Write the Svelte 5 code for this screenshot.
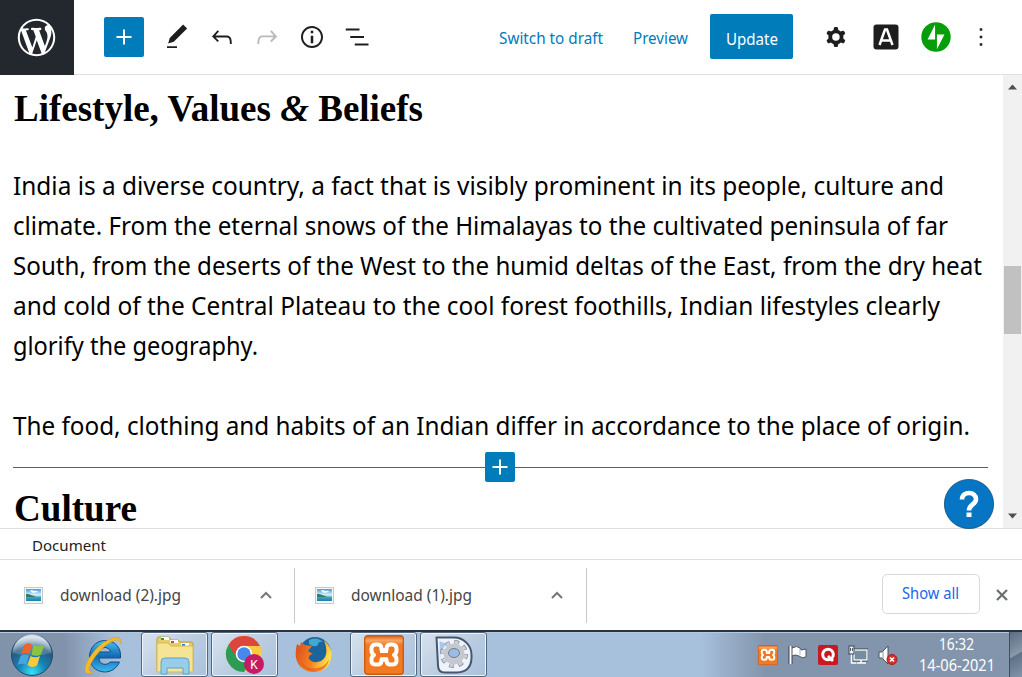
<script>
  const paragraph = [
    ['India is a diverse country, a fact that is visibly prominent in its people, culture and', 931],
    ['climate. From the eternal snows of the Himalayas to the cultivated peninsula of far', 935],
    ['South, from the deserts of the West to the humid deltas of the East, from the dry heat', 969],
    ['and cold of the Central Plateau to the cool forest foothills, Indian lifestyles clearly', 927],
    ['glorify the geography.', 245]
  ];
  const downloads = ['download (2).jpg', 'download (1).jpg'];
  const gear = 'M10.289 4.836A1 1 0 0111.275 4h1.306a1 1 0 01.987.836l.244 1.466c.787.26 1.503.679 2.108 1.218l1.393-.522a1 1 0 011.216.437l.653 1.13a1 1 0 01-.23 1.273l-1.148.944a6.025 6.025 0 010 2.435l1.149.946a1 1 0 01.23 1.272l-.653 1.13a1 1 0 01-1.216.437l-1.394-.522c-.605.54-1.32.958-2.108 1.218l-.244 1.466a1 1 0 01-.987.836h-1.306a1 1 0 01-.986-.836l-.244-1.466a5.995 5.995 0 01-2.108-1.218l-1.394.522a1 1 0 01-1.217-.436l-.653-1.131a1 1 0 01.23-1.272l1.149-.946a6.026 6.026 0 010-2.435l-1.148-.944a1 1 0 01-.23-1.272l.653-1.131a1 1 0 011.217-.437l1.393.522a5.994 5.994 0 012.108-1.218l.244-1.466zM14.929 12a3 3 0 11-6 0 3 3 0 016 0z';
</script>

{#snippet fit(text, width, height, base, cls)}
  <svg class="fit {cls}" {width} {height}><text x="0" y={base} textLength={width} lengthAdjust="spacingAndGlyphs">{text}</text></svg>
{/snippet}

{#snippet icon(d, size = 30)}
  <svg width={size} height={size} viewBox="0 0 24 24" fill="currentColor"><path fill-rule="evenodd" {d} /></svg>
{/snippet}

{#snippet xampp(size)}
  <svg width={size} height={size} viewBox="0 0 40 40">
    <defs><linearGradient id="xo" x2="0" y2="1"><stop stop-color="#d9601b" /><stop offset=".12" stop-color="#f7a764" /><stop offset=".25" stop-color="#ee7a22" /><stop offset="1" stop-color="#f5791f" /></linearGradient></defs>
    <rect x=".7" y=".7" width="38.6" height="38.6" rx="3" fill="url(#xo)" stroke="#cf5a14" stroke-width="1.4" />
    <path d="M13.500 9.500h-1.500q-4.500 0-4.500 4v2q0 3 2.500 4.500-2.500 1.500-2.500 4.500v1.500q0 3.500 4.500 3.500h1.500q4 0 4-4v-1h5v1q0 4 4 4h1.500q4.500 0 4.500-3.500v-1.500q0-3-2.500-4.500 2.500-1.500 2.500-4.500v-2q0-4-4.500-4h-1.500q-4 0-4 4v1.500h-5v-1.500q0-4-4-4z" fill="none" stroke="#fff" stroke-width="4" stroke-linejoin="round" />
    <path d="M16 15h8v3h-8zM16 22.500h8v3h-8z" fill="#fff" />
    <path d="M13 20h14" stroke="#f0761f" stroke-width="3" />
  </svg>
{/snippet}

<div class="screen">
  <header>
    <div class="wp">
      <svg width="45" height="45" viewBox="-2 -2 24 24" fill="#fff"><path d="M20 10c0-5.510-4.490-10-10-10C4.480 0 0 4.490 0 10c0 5.520 4.480 10 10 10 5.510 0 10-4.480 10-10zM7.780 15.370L4.370 6.220c.55-.02 1.170-.08 1.170-.08.5-.06.44-1.130-.06-1.110 0 0-1.450.11-2.370.11-.18 0-.37 0-.58-.01C4.120 2.690 6.870 1.110 10 1.110c2.330 0 4.450.87 6.050 2.340-.68-.11-1.650.39-1.650 1.580 0 .74.45 1.360.9 2.100.35.61.55 1.360.55 2.460 0 1.490-1.400 5-1.400 5l-3.030-8.370c.54-.02.82-.17.82-.17.5-.05.44-1.250-.06-1.220 0 0-1.440.12-2.380.12-.87 0-2.330-.12-2.330-.12-.5-.03-.56 1.200-.06 1.220l.92.08 1.260 3.410zM17.410 10c.24-.64.74-1.870.43-4.250.7 1.290 1.050 2.710 1.050 4.250 0 3.290-1.730 6.240-4.400 7.780.97-2.590 1.940-5.200 2.920-7.780zM6.100 18.090C3.120 16.650 1.110 13.530 1.110 10c0-1.300.23-2.480.72-3.590C3.250 10.300 4.670 14.200 6.100 18.090zm4.030-6.630l2.580 6.980c-.86.29-1.760.45-2.710.45-.79 0-1.570-.11-2.290-.33.81-2.380 1.620-4.740 2.420-7.100z" /></svg>
    </div>
    <div class="tools">
      <button class="add" aria-label="Add block">{@render icon('M18 11.2h-5.2V6h-1.6v5.2H6v1.6h5.2V18h1.6v-5.2H18z')}</button>
      <span class="tool">{@render icon('M20.1 5.1L16.900 2 6.200 12.700l-1.300 4.400 4.500-1.300L20.100 5.100zM4 20.800h8v-1.500H4v1.500z')}</span>
      <span class="tool">{@render icon('M18.3 11.7c-.6-.6-1.4-.9-2.3-.9H6.7l2.9-3.3-1.1-1-4.5 5L8.5 16l1-1-2.7-2.7H16c.5 0 .9.2 1.3.5 1 1 1 3.400 1 4.500v.3h1.500v-.2c0-1.500 0-4.300-1.500-5.700z')}</span>
      <span class="tool faded">{@render icon('M15.6 6.5l-1.100 1 2.900 3.300H8c-.9 0-1.700.3-2.300.9-1.400 1.500-1.400 4.200-1.400 5.600v.2h1.500v-.3c0-1.100 0-3.500 1-4.500.3-.3.7-.5 1.300-.5h9.200L14.500 15l1.100 1.100 4.600-4.600-4.600-5z')}</span>
      <span class="tool">{@render icon('M12 3.2c-4.8 0-8.8 3.9-8.8 8.8 0 4.8 3.9 8.8 8.8 8.8 4.8 0 8.8-3.9 8.8-8.8 0-4.8-4-8.8-8.8-8.8zm0 16c-4 0-7.2-3.3-7.2-7.2C4.8 8 8 4.8 12 4.8s7.2 3.3 7.2 7.2c0 4-3.2 7.2-7.2 7.2zM11 17h2v-6h-2v6zm0-8h2V7h-2v2z')}</span>
      <span class="tool">{@render icon('M3 5.2h11v1.5H3zM6.6 11.2h11v1.5h-11zM10.200 17.200h11v1.500h-11z')}</span>
    </div>
    <div class="actions">
      {@render fit('Switch to draft', 104, 24, 19, 'link')}
      {@render fit('Preview', 55, 24, 19, 'link preview')}
      <button class="update">{@render fit('Update', 52, 24, 20, 'white')}</button>
      <span class="tool cog">{@render icon(gear)}</span>
      <span class="tool"><svg width="26" height="26" viewBox="0 0 26 26"><rect x=".5" y=".5" width="25" height="25" rx="3" fill="#1e1e1e" /><path d="M6.500 21L12 5.500h2L19.500 21M8.500 16.500h9" fill="none" stroke="#fff" stroke-width="2.500" /></svg></span>
      <span class="tool"><svg width="30" height="30" viewBox="0 0 32 32"><circle cx="16" cy="16" r="15.700" fill="#069e08" /><path fill="#fff" d="M15 18.700H7L15 3zM17 29V13.300h8z" /></svg></span>
      <span class="tool dots">{@render icon('M13 19h-2v-2h2v2zm0-6h-2v-2h2v2zm0-6h-2V5h2v2z')}</span>
    </div>
  </header>

  <main>
    <article>
      <svg class="fit title" width="409" height="64"><text x="0" y="46" textLength="409" lengthAdjust="spacingAndGlyphs">Lifestyle, Values <tspan font-style="italic">&amp;</tspan> Beliefs</text></svg>
      <div class="para">
        {#each paragraph as [line, width]}{@render fit(line, width, 40, 29, 'copy')}{/each}
      </div>
      {@render fit('The food, clothing and habits of an Indian differ in accordance to the place of origin.', 957, 40, 29, 'copy last')}
      <div class="inserter"><button aria-label="Insert block">{@render icon('M18 11.2h-5.2V6h-1.6v5.2H6v1.6h5.2V18h1.6v-5.2H18z')}</button></div>
      {@render fit('Culture', 123, 46, 39, 'title')}
    </article>
    <div class="scroll">
      <svg width="9" height="6"><path d="M0 5.500L4.500.5 9 5.500z" fill="#505050" /></svg>
      <div class="thumb"></div>
      <svg width="9" height="6"><path d="M0 .5L4.500 5.500 9 .5z" fill="#505050" /></svg>
    </div>
    <div class="help"><svg width="50" height="50" viewBox="0 0 50 50"><circle cx="25" cy="25" r="24.600" fill="#0675c4" stroke="#164e78" stroke-width=".8" /><path d="M18 20.500c0-9 14.500-8.500 14 0-.3 5-7 5-7 11" fill="none" stroke="#fff" stroke-width="4.600" /><path d="M22.500 33.500h5v4.500h-5z" fill="#fff" /></svg></div>
  </main>

  <footer>{@render fit('Document', 74, 24, 16, 'doc')}</footer>

  <section class="downloads">
    {#each downloads as name}
      <div class="item">
        <svg class="pic" width="19" height="17" viewBox="0 0 19 17"><defs><linearGradient id="sky" x2="0" y2="1"><stop stop-color="#479be0" /><stop offset=".5" stop-color="#d5f4ff" /><stop offset=".7" stop-color="#45a1ad" /><stop offset="1" stop-color="#1682bd" /></linearGradient></defs><rect x=".5" y=".5" width="18" height="16" fill="#f7f7f7" stroke="#c8c8c8" /><path d="M2 2h15v12H2z" fill="url(#sky)" /><path d="M2 7c5 0 7 2 10 3H2z" fill="#327d64" /><path d="M6 4q2-2 4 0 3-1 4 1L9 6z" fill="#edfaff" /></svg>
        {@render fit(name, 121, 24, 18, 'file')}
        <svg class="chev" width="12" height="8"><path d="M1 7l5-5 5 5" fill="none" stroke="#747679" stroke-width="2" /></svg>
      </div>
    {/each}
    <button class="show">{@render fit('Show all', 57, 24, 17, 'blue')}</button>
    <svg class="close" width="12" height="12"><path d="M1 1l10 10M11 1L1 11" stroke="#6b6e72" stroke-width="2.200" /></svg>
  </section>

  <nav>
    <div class="slot start">
      <svg width="44" height="44" viewBox="0 0 44 44"><defs><radialGradient id="orb" cx=".5" cy=".92" r=".85"><stop stop-color="#37dff6" /><stop offset=".4" stop-color="#1681b4" /><stop offset=".75" stop-color="#285a80" /><stop offset="1" stop-color="#b0c7d7" /></radialGradient><linearGradient id="gl" x2="0" y2="1"><stop stop-color="#fff" stop-opacity=".6" /><stop offset="1" stop-color="#fff" stop-opacity=".1" /></linearGradient></defs>
        <circle cx="22" cy="22" r="20.500" fill="url(#orb)" stroke="#234b6a" /><path d="M3 20a19 19 0 0138 0q-19 6-38 0z" fill="url(#gl)" />
        <path d="M14 12q4-3 8-.5l-2.500 9.500q-4.500-2-8.500.5z" fill="#ed6529" /><path d="M23.500 12q5 2.500 10.500 0l-3 9.500q-4.500 2.500-9.500 0z" fill="#8ac440" /><path d="M10.500 23q4-2.500 8.500-.5l-3 9.500q-4-2.500-8.500 0z" fill="#49a5df" /><path d="M20.500 23q5 2.500 9.500 0l-3 9.500q-5 3-9.500-.5z" fill="#fbc83b" /></svg>
    </div>
    <div class="slot ie">
      <svg width="42" height="42" viewBox="0 0 42 42"><defs><linearGradient id="eg" x2="0" y2="1"><stop stop-color="#49c1ef" /><stop offset=".5" stop-color="#126bb4" /><stop offset="1" stop-color="#3dbbec" /></linearGradient></defs>
        <path d="M37.500 24H16c0 7 8 8 11 4h9.500c-3 7-9 10-15 10-21-1-19-30.500 0-31.500 11 0 17 7.500 16 17.500zM27.500 18c-1-6-10.500-6-11.500 0z" fill="url(#eg)" stroke="#104c8d" />
        <path d="M38 10c1-8-6-8-13-4C14 11 2 27 2 36c0 5 6 4 11 0-5 3-8 2-6.500-3C10 23 21 11 30 7c5-2 7-1 8 3z" fill="#f5ba27" stroke="#d7991a" stroke-width=".5" /></svg>
    </div>
    <div class="slot task">
      <svg width="42" height="42" viewBox="0 0 42 42"><path d="M3 5q0-2 2-2h10l2 3h7l2 2h11q2 0 2 2v26H3z" fill="#e6cd69" stroke="#bc9e40" /><path d="M7 3h8v3H7zM16 6h8v3h-8zM27 9h8v3h-8z" fill="#fff" /><path d="M7 4h3v2H7z" fill="#2c9b46" /><path d="M17 7h3v2h-3z" fill="#d9432d" /><path d="M28 10h3v2h-3z" fill="#3381ca" /><path d="M3 9h11l3 3h22v26H3z" fill="#f5e494" stroke="#d4b957" /><path d="M7 40V28q0-4 4-4h20q4 0 4 4v12h-6v-6H13v6z" fill="#96cee9" stroke="#5ba4ca" /></svg>
    </div>
    <div class="slot task chrome">
      <svg width="42" height="42" viewBox="0 0 42 42"><circle cx="20" cy="20" r="18" fill="#f9c93f" /><path d="M4.400 11A18 18 0 0136 12H20L12 25z" fill="#dc463c" /><path d="M4.400 11A18 18 0 0020 38l8-13-15-1z" fill="#2b9b55" /><circle cx="20" cy="20" r="8.300" fill="#fff" /><circle cx="20" cy="20" r="6.700" fill="#4788ef" /><circle cx="30" cy="30" r="10" fill="#c61b62" /><text x="30" y="34.500" text-anchor="middle" fill="#fff" font-size="12">K</text></svg>
    </div>
    <div class="slot firefox">
      <svg width="38" height="38" viewBox="0 0 38 38"><defs><linearGradient id="fx" x2="1" y2=".3"><stop stop-color="#d84920" /><stop offset=".6" stop-color="#f5841f" /><stop offset="1" stop-color="#ffe04b" /></linearGradient></defs><circle cx="20" cy="17" r="16" fill="#1c649d" /><path d="M14 4q8-4 14 2-5-1-5 3-4 3-9-1z" fill="#42a7d3" /><path d="M2 8l3 2 1-4 4 3 7 1-4 5 5 3q-5 1-4 5 4 5 12 2 9-5 3-21 11 10 6 22C29 41 4 39 1 22q-1-6 1-14z" fill="url(#fx)" /><path d="M5 22q4 12 18 10 8-2 11-9-2 12-15 13Q7 35 5 22z" fill="#e95923" opacity=".7" /></svg>
    </div>
    <div class="slot task">{@render xampp(40)}</div>
    <div class="slot task">
      <svg width="38" height="38" viewBox="0 0 38 38"><path d="M1.500 1.500H19A17.500 17.500 0 0136.500 19v3Q36 36 22 36.500H10q-7 0-7-7z" fill="#edf3fc" stroke="#48566d" stroke-width="2" stroke-linejoin="round" /><path d="M5 28L4.500 5l7 3-6 8z" fill="#a9c8ef" /><circle cx="19" cy="18" r="8" fill="#c7cbd1" /><circle cx="19" cy="18" r="12" fill="none" stroke="#858c95" stroke-width="4" stroke-dasharray="4.700 4.725" /><circle cx="19" cy="18" r="11.500" fill="none" stroke="#cdd1d6" stroke-width="3.500" stroke-dasharray="3.500 5.530" stroke-dashoffset="-.5" /><circle cx="19" cy="18" r="8.500" fill="none" stroke="#c5c9cf" stroke-width="4" /><ellipse cx="19" cy="17" rx="5.500" ry="4.500" fill="#9bbce7" stroke="#727d8b" /></svg>
    </div>
    <div class="tray">
      {@render xampp(20)}
      <svg width="20" height="20"><path d="M2.500 1v18" stroke="#39424c" stroke-width="4" /><path d="M4 3q5-3 8 0l1 2 5-1v8q-4 2-7-1-4-2-7 0z" fill="#fff" stroke="#4b5660" /><path d="M2.500 1v18" stroke="#fff" stroke-width="2" /><path d="M12 4v6" stroke="#adb7bf" /></svg>
      <svg width="20" height="20"><rect width="20" height="20" rx="2" fill="#c81920" /><circle cx="10" cy="9.500" r="5.300" fill="none" stroke="#fff" stroke-width="3" /><path d="M10 11l5 5" stroke="#fff" stroke-width="2.800" /></svg>
      <svg width="20" height="20"><rect x="6" y="5" width="13" height="10" fill="#718b9e" stroke="#3a4752" stroke-width="3" /><rect x="6" y="5" width="13" height="10" fill="#768da0" stroke="#fff" stroke-width="1.300" /><path d="M9 18h9M13 15v3M3.500 8v10h5" fill="none" stroke="#fff" stroke-width="1.500" /><rect x="1" y="1" width="5" height="8" fill="#e7edf2" stroke="#3a4752" /><path d="M2.500 3v3M4.500 3v3" stroke="#52606c" /></svg>
      <svg width="20" height="20"><path d="M1 7h3l6-6v18l-6-6H1z" fill="#fff" stroke="#47525d" /><path d="M5 6v8" stroke="#8d9aa6" /><circle cx="14" cy="14.500" r="5" fill="#d92e2a" stroke="#9c201f" /><path d="M12 12.500l4 4M16 12.500l-4 4" stroke="#fff" stroke-width="1.500" /></svg>
    </div>
    <div class="clock">{@render fit('16:32', 35, 22, 17, 'white')}{@render fit('14-06-2021', 76, 22, 16, 'white')}</div>
    <div class="desk"></div>
  </nav>
</div>

<style>
  :global(body) { margin: 0; }
  .screen { width: 1022px; height: 677px; overflow: hidden; display: flex; flex-direction: column; background: #fff; font-family: "Noto Sans", sans-serif; }
  svg { display: block; flex: none; }
  button { border: 0; padding: 0; margin: 0; display: flex; align-items: center; justify-content: center; font: inherit; }
  .fit { overflow: visible; font-size: 15.500px; fill: #222; }
  header { height: 75px; flex: none; box-sizing: border-box; border-bottom: 1px solid #e0e0e0; display: flex; color: #1e1e1e; }
  .wp { width: 74px; height: 75px; padding-right: 1px; box-sizing: border-box; flex: none; background: #23282e; display: flex; align-items: center; justify-content: center; }
  .tools { display: flex; align-items: center; margin-left: 30px; gap: 5px; height: 74px; }
  .tool { width: 40px; height: 40px; display: flex; align-items: center; justify-content: center; }
  .faded { opacity: .3; }
  .add { width: 40px; height: 40px; background: #007cba; color: #fff; border-radius: 2px; margin-right: 8px; }
  .actions { display: flex; align-items: center; margin-left: 122px; height: 74px; gap: 10px; }
  .link { fill: #007cba; }
  .fit.white { fill: #fff; }
  .preview { margin-left: 20px; }
  .update { width: 83px; height: 45px; background: #007cba; border-radius: 2px; margin: 0 0 1px 12px; }
  .cog { margin-left: 13px; }
  .dots { margin-left: -5px; }
  main { position: relative; flex: none; height: 453px; display: flex; }
  article { width: 1003px; box-sizing: border-box; padding-left: 13px; }
  .title { font: bold 38px "Liberation Serif", serif; fill: #000; margin-left: 1px; }
  .copy { font-family: "Noto Sans", sans-serif; font-size: 25px; fill: #000; }
  .para { padding-top: 27px; }
  .last { margin-top: 40px; }
  .inserter { width: 975px; height: 30px; box-sizing: border-box; padding-right: 1px; margin: 6px 0 0; display: flex; justify-content: center; background: linear-gradient(#007cba, #007cba) 0 15px / 100% 1px no-repeat; }
  .inserter button { width: 30px; height: 30px; background: #007cba; color: #fff; border-radius: 2px; margin-right: 1px; }
  .scroll { width: 19px; box-sizing: border-box; padding: 9px 0; background: #f1f1f1; display: flex; flex-direction: column; align-items: center; }
  .thumb { width: 17px; height: 68px; background: #c1c1c1; margin: 176px 0 179px; }
  .help { position: absolute; left: 944px; top: 404px; }
  footer { height: 32px; flex: none; box-sizing: border-box; border-top: 1px solid #ddd; border-bottom: 1px solid #ddd; padding: 6px 0 0 32px; }
  .doc { font-size: 14.500px; }
  .downloads { height: 70px; flex: none; display: flex; align-items: center; }
  .item { height: 55px; width: 295px; box-sizing: border-box; border-right: 1px solid #c8c8c8; display: flex; align-items: center; padding-left: 24px; }
  .item + .item { width: 292px; padding-left: 20px; }
  .file { margin-left: 17px; fill: #454545; }
  .chev { margin-left: 79px; }
  .show { width: 98px; height: 40px; box-sizing: border-box; border: 1px solid #d7d9dc; border-radius: 5px; background: #fff; margin: 0 0 2px 295px; padding-right: 1px; }
  .blue { fill: #1a67e8; }
  .close { margin: 0 0 1px 16px; }
  nav { height: 47px; flex: none; box-sizing: border-box; border-top: 2px solid #273444; background: linear-gradient(90deg, #8193ab 0, #8193ab 64px, #a7c0dc 115px, #a7c0dc 700px, #8295ac 765px, #8295ac 100%); display: flex; align-items: center; box-shadow: inset 0 1px #b6c8da; }
  .slot { flex: none; height: 45px; display: flex; align-items: center; justify-content: center; box-sizing: border-box; }
  .start { width: 64px; }
  .ie { width: 76px; margin-right: 1px; padding-left: 3px; }
  .task { width: 67px; margin-right: 3px; border: 1px solid #53667a; border-radius: 3px; background: linear-gradient(135deg, #d7e2ee, #b7cae0 60%, #abc2dd); box-shadow: inset 0 0 0 1px #edf3f8; }
  .chrome { padding-left: 0; }
  .chrome text { font-family: "Roboto", sans-serif; }
  .firefox { width: 69px; padding-right: 3px; }
  .tray { display: flex; gap: 10px; margin-left: 268px; }
  .clock { flex: 1; display: flex; flex-direction: column; align-items: center; padding-left: 6px; }
  .desk { width: 13px; height: 45px; box-sizing: border-box; border-left: 1px solid #3d5063; background: linear-gradient(150deg, #5b6d82, #8998aa 50%, #5e7188 52%, #8395aa); }
</style>
